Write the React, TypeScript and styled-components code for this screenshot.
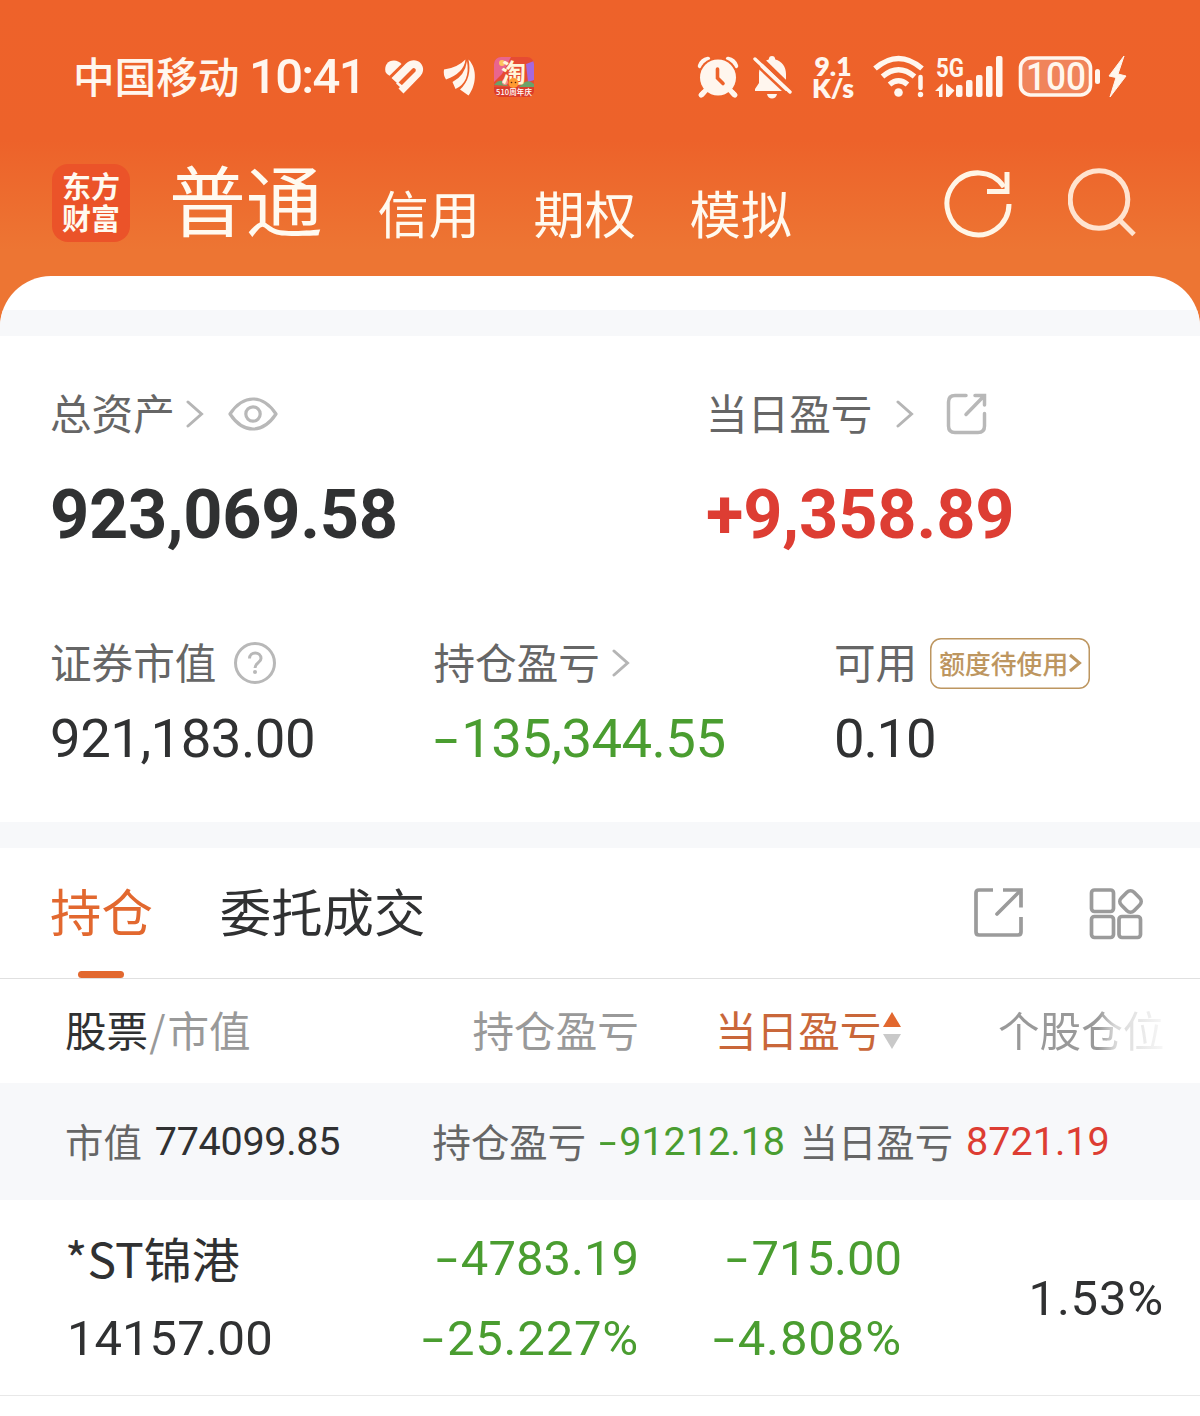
import React from "react";
import styled, { createGlobalStyle } from "styled-components";

const GlobalStyle = createGlobalStyle`
  * { box-sizing: border-box; }
  body { margin: 0; background: #fff; }
`;

const cjk = `"Noto Sans CJK SC", sans-serif`;
const latin = `Roboto, "Noto Sans CJK SC", sans-serif`;

const color = {
  ink: "#303132",
  label: "#666",
  muted: "#999",
  faint: "#b8b8b8",
  band: "#f7f8fa",
  accent: "#e2682f",
  up: "#dd3d33",
  down: "#4a9d30",
  gold: "#bd9660",
  cream: "#fff6ee",
};

const Page = styled.div`
  width: 1200px;
  height: 1416px;
  overflow: hidden;
  display: flex;
  flex-direction: column;
  font-family: ${cjk};
  color: ${color.ink};
  background: linear-gradient(180deg, #ee622a 0, #ed622a 140px, #ed7533 250px, #ed7633 100%);
  white-space: nowrap;
`;

const StatusBar = styled.div`
  height: 154px;
  display: flex;
  align-items: center;
  padding-left: 73px;
  color: ${color.cream};
`;

const StatusIcon = styled.svg<{ $gap?: number }>`
  flex: none;
  display: block;
  overflow: visible;
  margin-left: ${(p) => p.$gap ?? 0}px;
`;

const Carrier = styled.span`
  font-size: 41.6px;
  line-height: 60px;
  font-weight: 500;
  width: 167px;
  margin-top: -5px;
`;

const Num = styled.span<{ $size: number; $spacing?: number; $weight?: number; $color?: string }>`
  font-family: ${latin};
  font-size: ${(p) => p.$size}px;
  line-height: 1.17;
  letter-spacing: ${(p) => p.$spacing ?? 0}px;
  font-weight: ${(p) => p.$weight ?? 400};
  color: ${(p) => p.$color ?? "inherit"};
`;

const Clock = styled(Num)`
  width: 136px;
  padding-left: 9px;
`;

const MinusBox = styled.span`
  display: inline-block;
  width: 0.51em;
  letter-spacing: 0;
  & > span {
    display: inline-block;
    transform: scaleX(1.6);
    transform-origin: 0 50%;
  }
`;

const NetSpeed = styled.div`
  display: flex;
  flex-direction: column;
  align-items: center;
  width: 46px;
  margin-left: 16px;
  font: 800 26.5px/22px Lato, ${cjk};
`;

const NavBar = styled.div`
  height: 122px;
  display: flex;
  align-items: flex-start;
  padding: 10px 0 0 52px;
  color: #fffaf0;
`;

const Logo = styled.div`
  width: 78px;
  height: 78px;
  border-radius: 16px;
  background: #eb5329;
  display: flex;
  flex-direction: column;
  align-items: center;
  padding-top: 5px;
  font-size: 29px;
  line-height: 32px;
  font-weight: 700;
`;

const NavTitle = styled.span`
  font-size: 76.8px;
  line-height: 76px;
  margin: -4px 55px 0 39px;
`;

const NavTabs = styled.div`
  display: flex;
  gap: 53.6px;
  font-size: 51.2px;
  line-height: 60px;
  margin-top: 18px;
  width: 566px;
`;

const NavIcon = styled.svg<{ $gap?: number }>`
  flex: none;
  margin-left: ${(p) => p.$gap ?? 0}px;
`;

const Panel = styled.main`
  flex: 1;
  background: #fff;
  border-radius: 51px 51px 0 0;
  overflow: hidden;
  padding-top: 34px;
`;

const Band = styled.div`
  height: 26px;
  background: ${color.band};
`;

const Assets = styled.section`
  height: 486px;
  padding: 48px 0 0 50px;
`;

const Totals = styled.div`
  display: grid;
  grid-template-columns: 656px 1fr;
`;

const Breakdown = styled.div`
  display: grid;
  grid-template-columns: 383.5px 400.5px 1fr;
  margin-top: 78px;
`;

const LabelRow = styled.div`
  height: 60px;
  display: flex;
  align-items: center;
`;

const Label = styled.span`
  font-size: 41.6px;
  line-height: 60px;
  color: ${color.label};
  margin-top: -4px;
`;

const TotalValue = styled.div`
  height: 80px;
  margin-top: 31px;
`;

const SubValue = styled.div`
  height: 64px;
  margin-top: 14px;
`;

const Icon = styled.svg<{ $gap?: number }>`
  flex: none;
  display: block;
  margin-left: ${(p) => p.$gap ?? 0}px;
`;

const QuotaButton = styled.button`
  width: 160px;
  height: 51px;
  margin-left: 13px;
  padding: 0 0 0 9px;
  display: flex;
  align-items: center;
  border: 0;
  box-shadow: inset 0 0 0 1.5px ${color.gold};
  border-radius: 11px;
  background: #fff;
  color: ${color.gold};
  font: 500 25.8px/46px ${cjk};
`;

const TabBar = styled.nav`
  height: 131px;
  display: flex;
  align-items: flex-start;
  padding-left: 50px;
  border-bottom: 1px solid #e0e0e0;
`;

const Tab = styled.div<{ $active?: boolean }>`
  height: 130px;
  display: flex;
  flex-direction: column;
  align-items: center;
  justify-content: space-between;
  padding-top: 27px;
  margin-right: 67px;
  font-size: 51.4px;
  line-height: 70px;
  color: ${(p) => (p.$active ? color.accent : color.ink)};
`;

const Underline = styled.i`
  width: 46px;
  height: 7px;
  border-radius: 4px;
  background: ${color.accent};
`;

const TabIcons = styled.div`
  flex: 1;
  display: flex;
  justify-content: flex-end;
  gap: 63.5px;
  padding: 37px 55.5px 0 0;
`;

const HeadRow = styled.div`
  height: 104px;
  display: grid;
  grid-template-columns: 407.5px 242.5px 283px 1fr;
  align-items: center;
  padding: 0 0 4px 65px;
  font-size: 41.6px;
  line-height: 60px;
  color: ${color.muted};
`;

const Strong = styled.span`
  color: ${color.ink};
`;

const Slash = styled.span`
  padding: 0 2px 0 1px;
`;

const SortCell = styled.div`
  display: flex;
  align-items: center;
  color: #c9673a;
`;

const FadeText = styled.span`
  width: 167px;
  color: transparent;
  background: linear-gradient(90deg, #999 0, #999 60%, #d8d8d8 70%, #f8f8f8 100%);
  background-clip: text;
  -webkit-background-clip: text;
`;

const Summary = styled.div`
  height: 117px;
  background: ${color.band};
  display: grid;
  grid-template-columns: 367.5px 367px 1fr;
  align-items: center;
  padding-left: 65px;
`;

const Pair = styled.div`
  display: flex;
  align-items: center;
  gap: 13px;
  font-size: 38.4px;
  line-height: 56px;
  padding-bottom: 3px;
  color: ${color.label};
  & > * {
    margin-top: 5px;
  }
`;

const Holding = styled.div`
  height: 196px;
  display: grid;
  grid-template-columns: 274px 300px 263px 262px;
  padding: 18px 0 0 65px;
  border-bottom: 1px solid #e8e8e8;
`;

const Cell = styled.div<{ $right?: boolean }>`
  display: flex;
  flex-direction: column;
  align-items: ${(p) => (p.$right ? "flex-end" : "flex-start")};
  & > * {
    height: 79.5px;
    line-height: 81px;
  }
`;

const StockName = styled.span`
  font-size: 48px;
  margin: -1px 0 1px;
`;

const MarketValue = styled(Num)`
  padding-left: 2px;
`;

const Weight = styled(Cell)`
  justify-content: flex-start;
  padding-top: 40px;
`;

const Minus = () => (
  <MinusBox>
    <span>-</span>
  </MinusBox>
);

const Chevron = ({ gap, stroke = "#b5b5b5" }: { gap: number; stroke?: string }) => (
  <Icon $gap={gap} width="18" height="30" viewBox="0 0 18 30" fill="none" stroke={stroke} strokeWidth="3">
    <path d="M2 3L15.500 15L2 27" strokeLinecap="round" />
  </Icon>
);

const StatusIcons = () => (
  <>
    <StatusIcon $gap={162} width="44" height="44" viewBox="0 0 44 44">
      <g fill="none" stroke={color.cream} strokeLinecap="round">
        <path d="M4 11Q6 5 12 4M32 4Q38 5 40 11" strokeWidth="4.500" />
        <path d="M9 36L5 40M35 36L39 40" strokeWidth="5" />
      </g>
      <circle cx="22" cy="22.500" r="20" fill="#ed622a" />
      <path d="M10 35L6 39.500M34 35L38 39.500" stroke={color.cream} strokeWidth="5" strokeLinecap="round" />
      <circle cx="22" cy="22.500" r="18" fill={color.cream} />
      <path d="M21.500 14V23L27 28.500" fill="none" stroke="#ed622a" strokeWidth="3.600" strokeLinecap="round" />
    </StatusIcon>
    <StatusIcon $gap={12} width="42" height="46" viewBox="0 0 42 46">
      <path
        d="M20 2C22 2 23 3 23.300 5.500C30 7 34 13 34 20V30L38 37H3V35L7 29V19C7 12 11 7 16.700 5.500C17 3 18 2 20 2ZM15 40H25C24 46 16 46 15 40Z"
        fill={color.cream}
      />
      <path d="M5 1L42 37" stroke="#ed622a" strokeWidth="5" />
      <path d="M3 5L38 38" stroke={color.cream} strokeWidth="3.400" strokeLinecap="round" />
      <path d="M0 7L34 39" stroke="#ed622a" strokeWidth="2.500" />
    </StatusIcon>
    <NetSpeed>
      <span>9.1</span>
      <span>K/s</span>
    </NetSpeed>
    <StatusIcon $gap={17} width="54" height="44" viewBox="0 0 54 44">
      <g fill="none" stroke={color.cream} strokeWidth="5.500">
        <path d="M2 13.500Q25.500-6.500 49 13.500" />
        <path d="M9.500 21.500Q25.500 8 41.500 21.500" />
        <path d="M16.500 29.500Q25.500 22 34.500 29.500" />
      </g>
      <circle cx="25.500" cy="37.500" r="4.300" fill={color.cream} />
      <path d="M47.500 22V33" stroke={color.cream} strokeWidth="4.500" strokeLinecap="round" />
      <circle cx="47.500" cy="39.500" r="2.700" fill={color.cream} />
    </StatusIcon>
    <StatusIcon $gap={9} width="70" height="46" viewBox="0 0 70 46" fill={color.cream}>
      <text x="0" y="22.500" fontFamily="Roboto" fontWeight="700" fontSize="26" textLength="28" lengthAdjust="spacingAndGlyphs">
        5G
      </text>
      <path d="M-1 37L6.500 29.500V43H3V37ZM10 29.500L18.500 36.500L13 42.500V43H10Z" />
      <rect x="20" y="31" width="6.500" height="12" rx="2" />
      <rect x="30" y="26" width="6.500" height="17" rx="2" />
      <rect x="40" y="21" width="6.500" height="22" rx="2" />
      <rect x="50" y="12" width="6.500" height="31" rx="2" />
      <rect x="60" y="2" width="6.500" height="41" rx="2" />
    </StatusIcon>
    <StatusIcon $gap={12} width="112" height="46" viewBox="0 0 112 46">
      <rect x="2.500" y="4" width="70" height="37" rx="10" fill="#f0845b" stroke={color.cream} strokeWidth="3.600" />
      <text x="8" y="36" fontFamily="Roboto" fontWeight="500" fontSize="38" fill={color.cream} textLength="60" lengthAdjust="spacingAndGlyphs">
        100
      </text>
      <rect x="77" y="15" width="5" height="15" rx="2.500" fill={color.cream} />
      <path d="M106 2L91 22L98 23.500L92 43L108 22L100 20Z" fill={color.cream} stroke={color.cream} strokeLinejoin="round" />
    </StatusIcon>
  </>
);

const NotificationIcons = () => (
  <>
    <StatusIcon $gap={9} width="40" height="38" viewBox="0 0 40 38" fill={color.cream}>
      <path d="M0.500 14C-1 7 3 2.500 9 2.500Q13.500 2.500 16.500 6L4.500 17.700Q1.500 16 .5 14Z" />
      <path
        d="M6.500 20L21 5.500C26 1 32 1.500 35.500 5C39.500 9.500 38.500 14.500 35.500 18L18.500 35.500L13.500 30.500L30.500 13.500Q31.500 11.500 30 10.500Q28.500 9.500 27 11L12.500 25.500Z"
      />
      <path d="M16 30L11 25.500L13 24L18 28Z" />
    </StatusIcon>
    <StatusIcon $gap={19} width="34" height="40" viewBox="0 0 34 40" fill={color.cream}>
      <path d="M0 12.500Q13 11 21.500 2.500Q20 16 2 22.500Q-1 18 0 12.500Z" />
      <path d="M23 4Q21 18.500 8.500 25L11.500 32Q26.500 25 23 4Z" />
      <path d="M24.500 2.500C34 12 32 29 24.500 38.500L16 32.500Q28.500 21 24.500 2.500Z" />
    </StatusIcon>
    <StatusIcon $gap={16} width="40" height="40" viewBox="0 0 40 40">
      <defs>
        <clipPath id="shop-clip">
          <rect width="40" height="40" rx="7" />
        </clipPath>
      </defs>
      <g clipPath="url(#shop-clip)">
        <rect width="40" height="40" fill="#e64b32" />
        <path d="M0 0H17L8 17L0 25Z" fill="#e9658e" />
        <path d="M32 7L40 4V23L34 25Z" fill="#a568dd" />
        <circle cx="8" cy="6" r="3" fill="#ffc35d" />
        <path d="M0 28Q7 19 14 29ZM27 28Q34 21 40 27V30H25Z" fill="#6aa26a" />
        <circle cx="11" cy="25" r="3" fill="#f78b8c" />
        <rect y="30" width="40" height="10" fill="#db3d2b" />
      </g>
      <text x="7" y="24.500" fontFamily="Noto Sans CJK SC" fontWeight="700" fontSize="25" fill="#fff6d9">
        淘
      </text>
      <circle cx="19.500" cy="26" r="5" fill="#ff9a30" />
      <circle cx="17.500" cy="25.500" r=".8" fill="#512512" />
      <circle cx="21.500" cy="25.500" r=".8" fill="#512512" />
      <text x="2" y="38" fontFamily="Noto Sans CJK SC" fontWeight="500" fontSize="7.500" fill="#fff" textLength="36">
        510周年庆
      </text>
    </StatusIcon>
  </>
);

export default function App() {
  return (
    <>
      <GlobalStyle />
      <Page>
        <StatusBar>
          <Carrier>中国移动</Carrier>
          <Clock $size={49} $weight={500} $spacing={-1.7}>
            10:41
          </Clock>
          <NotificationIcons />
          <StatusIcons />
        </StatusBar>
        <NavBar>
          <Logo>
            <span>东方</span>
            <span>财富</span>
          </Logo>
          <NavTitle>普通</NavTitle>
          <NavTabs>
            <span>信用</span>
            <span>期权</span>
            <span>模拟</span>
          </NavTabs>
          <NavIcon width="70" height="76" viewBox="0 0 70 76" fill="none" stroke="#fff5e6" strokeWidth="5">
            <path d="M65 40A31 31 0 1 1 60 23" />
            <path d="M63 8V27.500H43" />
          </NavIcon>
          <NavIcon $gap={54} width="70" height="76" viewBox="0 0 70 76" fill="none" stroke="#ffe3cf" strokeWidth="5">
            <circle cx="31" cy="35.500" r="28.800" />
            <path d="M51 55.500L66 70.500" />
          </NavIcon>
        </NavBar>
        <Panel>
          <Band />
          <Assets>
            <Totals>
              <div>
                <LabelRow>
                  <Label>总资产</Label>
                  <Chevron gap={11} />
                  <Icon $gap={24} width="50" height="34" viewBox="0 0 50 34" fill="none" stroke={color.faint} strokeWidth="3.200">
                    <path d="M2 17Q12 2 25 2T48 17Q38 32 25 32T2 17Z" strokeLinejoin="round" />
                    <circle cx="25" cy="17" r="7.200" />
                  </Icon>
                </LabelRow>
                <TotalValue>
                  <Num $size={68.5} $weight={700} $spacing={-0.35}>
                    923,069.58
                  </Num>
                </TotalValue>
              </div>
              <div>
                <LabelRow>
                  <Label>当日盈亏</Label>
                  <Chevron gap={24} />
                  <Icon $gap={32} width="42" height="42" viewBox="0 0 42 42" fill="none" stroke={color.faint} strokeWidth="3.500" strokeLinecap="round">
                    <path d="M20 2.500H9Q2.500 2.500 2.500 9V33Q2.500 39.500 9 39.500H32Q38.500 39.500 38.500 33V20.500" />
                    <path d="M29 2.500H38.500V12M38 3L20 21.500" />
                  </Icon>
                </LabelRow>
                <TotalValue>
                  <Num $size={68.5} $weight={700} $spacing={-0.15} $color={color.up}>
                    +9,358.89
                  </Num>
                </TotalValue>
              </div>
            </Totals>
            <Breakdown>
              <div>
                <LabelRow>
                  <Label>证券市值</Label>
                  <Icon $gap={17} width="44" height="44" viewBox="0 0 44 44" fill="none" stroke={color.faint} strokeWidth="3">
                    <circle cx="22" cy="22" r="19.500" />
                    <path d="M16.500 17.500C16.500 10 28 10 28 17.500C28 21.500 22 22 22 27" />
                    <circle cx="22" cy="31" r="2" fill={color.faint} stroke="none" />
                  </Icon>
                </LabelRow>
                <SubValue>
                  <Num $size={54.5} $spacing={-0.5}>921,183.00</Num>
                </SubValue>
              </div>
              <div>
                <LabelRow>
                  <Label>持仓盈亏</Label>
                  <Chevron gap={12} />
                </LabelRow>
                <SubValue>
                  <Num $size={54.5} $spacing={-0.6} $color={color.down}>
                    <Minus />
                    135,344.55
                  </Num>
                </SubValue>
              </div>
              <div>
                <LabelRow>
                  <Label>可用</Label>
                  <QuotaButton>
                    额度待使用
                    <Icon width="14" height="20" viewBox="0 0 14 20" fill="none" stroke={color.gold} strokeWidth="3">
                      <path d="M2 2L11.500 10L2 18" />
                    </Icon>
                  </QuotaButton>
                </LabelRow>
                <SubValue>
                  <Num $size={54.5} $spacing={-1.2}>0.10</Num>
                </SubValue>
              </div>
            </Breakdown>
          </Assets>
          <Band />
          <TabBar>
            <Tab $active>
              持仓
              <Underline />
            </Tab>
            <Tab>委托成交</Tab>
            <TabIcons>
              <Icon width="54" height="54" viewBox="0 0 54 54" fill="none" stroke="#9b9b9b" strokeWidth="3.700">
                <path d="M22 5H8Q5 5 5 8V47Q5 50 8 50H47Q50 50 50 47V32" />
                <path d="M32 5H50V22.500" />
                <path d="M49 6L26 29" strokeLinecap="round" />
              </Icon>
              <Icon width="56" height="56" viewBox="0 0 56 56" fill="none" stroke="#9b9b9b" strokeWidth="3.700">
                <rect x="2.500" y="5" width="22" height="21.500" rx="3" />
                <rect x="2.500" y="31.500" width="22" height="21" rx="3" />
                <rect x="30" y="31.500" width="21.500" height="21" rx="3" />
                <rect x="32.500" y="7.500" width="18" height="18" rx="5" transform="rotate(45 41.500 16.500)" />
              </Icon>
            </TabIcons>
          </TabBar>
          <HeadRow>
            <span>
              <Strong>股票</Strong>
              <Slash>/</Slash>市值
            </span>
            <span>持仓盈亏</span>
            <SortCell>
              当日盈亏
              <Icon $gap={2} width="18" height="40" viewBox="0 0 18 40">
                <path d="M9 3L18 18H0Z" fill="#e2682f" />
                <path d="M0 25H18L9 40Z" fill="#c9c9c9" />
              </Icon>
            </SortCell>
            <FadeText>个股仓位</FadeText>
          </HeadRow>
          <Summary>
            <Pair>
              市值
              <Num $size={39.5} $spacing={-0.3} $color={color.ink}>
                774099.85
              </Num>
            </Pair>
            <Pair>
              持仓盈亏
              <Num $size={39.5} $color={color.down}>
                <Minus />
                91212.18
              </Num>
            </Pair>
            <Pair>
              当日盈亏
              <Num $size={39.5} $color={color.up}>
                8721.19
              </Num>
            </Pair>
          </Summary>
          <Holding>
            <Cell>
              <StockName>*ST锦港</StockName>
              <MarketValue $size={49}>14157.00</MarketValue>
            </Cell>
            <Cell $right>
              <Num $size={49} $color={color.down}>
                <Minus />
                4783.19
              </Num>
              <Num $size={49} $spacing={0.8} $color={color.down}>
                <Minus />
                25.227%
              </Num>
            </Cell>
            <Cell $right>
              <Num $size={49} $color={color.down}>
                <Minus />
                715.00
              </Num>
              <Num $size={49} $spacing={0.9} $color={color.down}>
                <Minus />
                4.808%
              </Num>
            </Cell>
            <Weight $right>
              <Num $size={49} $spacing={0.8}>1.53%</Num>
            </Weight>
          </Holding>
        </Panel>
      </Page>
    </>
  );
}
